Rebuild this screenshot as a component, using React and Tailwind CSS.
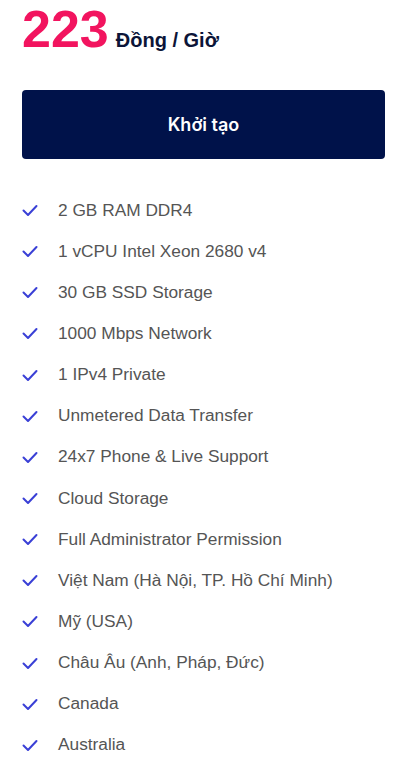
const features = [
  '2 GB RAM DDR4',
  '1 vCPU Intel Xeon 2680 v4',
  '30 GB SSD Storage',
  '1000 Mbps Network',
  '1 IPv4 Private',
  'Unmetered Data Transfer',
  '24x7 Phone & Live Support',
  'Cloud Storage',
  'Full Administrator Permission',
  'Việt Nam (Hà Nội, TP. Hồ Chí Minh)',
  'Mỹ (USA)',
  'Châu Âu (Anh, Pháp, Đức)',
  'Canada',
  'Australia',
];

function Check() {
  return (
    <svg width="16" height="13" viewBox="0 0 16 13" fill="none" className="shrink-0">
      <path d="M1.5 6.5 L6 11 L14.5 2" stroke="#3a40d6" strokeWidth="2" strokeLinecap="round" strokeLinejoin="round" />
    </svg>
  );
}

export default function App() {
  return (
    <div className="min-h-screen bg-white font-['Liberation_Sans',Arial,sans-serif]">
      <div className="px-[22px]">
        <div className="flex items-baseline gap-[7px]">
          <span className="text-[52px] leading-[58px] font-bold text-[#f2145f]">223</span>
          <span className="text-[20px] font-bold text-[#0c1538]">Đồng / Giờ</span>
        </div>

        <button className="mt-[32px] flex h-[69px] w-full items-center justify-center rounded-[4px] bg-[#00124a] font-['Inter',sans-serif] text-[18px] font-semibold text-white">
          Khởi tạo
        </button>

        <ul className="mt-[31px] flex flex-col">
          {features.map((f) => (
            <li key={f} className="flex h-[41.15px] items-center gap-[20px] text-[17.3px] text-[#555]">
              <Check />
              <span>{f}</span>
            </li>
          ))}
        </ul>
      </div>
    </div>
  );
}
